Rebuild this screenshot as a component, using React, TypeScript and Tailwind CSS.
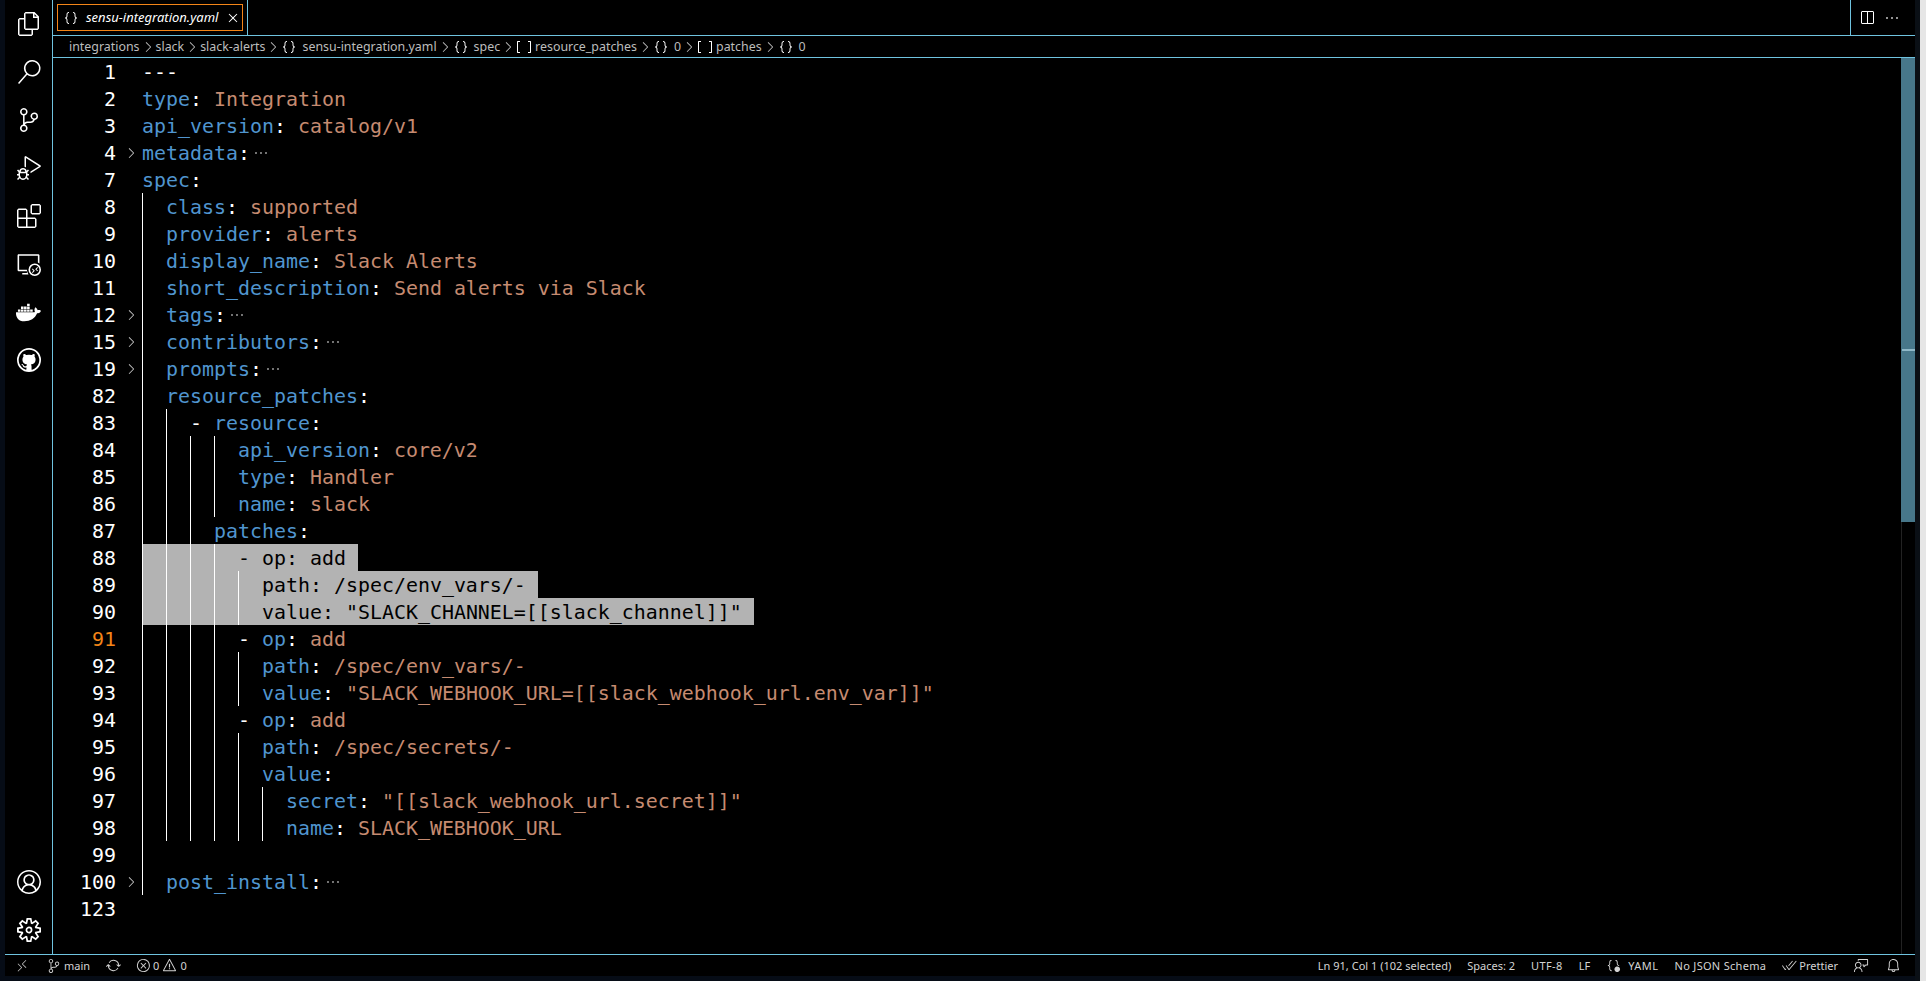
// App.tsx - VS Code high contrast editor window with a yaml file open
import { FaDocker } from 'react-icons/fa'
import {
  VscAccount,
  VscBell,
  VscBracketDot,
  VscCheckAll,
  VscChevronRight,
  VscClose,
  VscDebugAlt,
  VscEllipsis,
  VscError,
  VscExtensions,
  VscFeedback,
  VscFiles,
  VscGithub,
  VscJson,
  VscRemote,
  VscRemoteExplorer,
  VscSearch,
  VscSettingsGear,
  VscSourceControl,
  VscSplitHorizontal,
  VscSymbolArray,
  VscSync,
  VscWarning,
} from 'react-icons/vsc'

type Row = {
  n: number
  ind?: number
  dash?: boolean
  key?: string
  val?: string
  plain?: string
  fold?: boolean
  sel?: boolean
  active?: boolean
}

const rows: Row[] = [
  { n: 1, plain: '---' },
  { n: 2, key: 'type', val: 'Integration' },
  { n: 3, key: 'api_version', val: 'catalog/v1' },
  { n: 4, key: 'metadata', fold: true },
  { n: 7, key: 'spec' },
  { n: 8, ind: 2, key: 'class', val: 'supported' },
  { n: 9, ind: 2, key: 'provider', val: 'alerts' },
  { n: 10, ind: 2, key: 'display_name', val: 'Slack Alerts' },
  { n: 11, ind: 2, key: 'short_description', val: 'Send alerts via Slack' },
  { n: 12, ind: 2, key: 'tags', fold: true },
  { n: 15, ind: 2, key: 'contributors', fold: true },
  { n: 19, ind: 2, key: 'prompts', fold: true },
  { n: 82, ind: 2, key: 'resource_patches' },
  { n: 83, ind: 4, dash: true, key: 'resource' },
  { n: 84, ind: 8, key: 'api_version', val: 'core/v2' },
  { n: 85, ind: 8, key: 'type', val: 'Handler' },
  { n: 86, ind: 8, key: 'name', val: 'slack' },
  { n: 87, ind: 6, key: 'patches' },
  { n: 88, ind: 8, dash: true, key: 'op', val: 'add', sel: true },
  { n: 89, ind: 10, key: 'path', val: '/spec/env_vars/-', sel: true },
  { n: 90, ind: 10, key: 'value', val: '"SLACK_CHANNEL=[[slack_channel]]"', sel: true },
  { n: 91, ind: 8, dash: true, key: 'op', val: 'add', active: true },
  { n: 92, ind: 10, key: 'path', val: '/spec/env_vars/-' },
  { n: 93, ind: 10, key: 'value', val: '"SLACK_WEBHOOK_URL=[[slack_webhook_url.env_var]]"' },
  { n: 94, ind: 8, dash: true, key: 'op', val: 'add' },
  { n: 95, ind: 10, key: 'path', val: '/spec/secrets/-' },
  { n: 96, ind: 10, key: 'value' },
  { n: 97, ind: 12, key: 'secret', val: '"[[slack_webhook_url.secret]]"' },
  { n: 98, ind: 12, key: 'name', val: 'SLACK_WEBHOOK_URL' },
  { n: 99 },
  { n: 100, ind: 2, key: 'post_install', fold: true },
  { n: 123 },
]

// indent column, first line, last line
const guideRanges = [
  [0, 8, 100],
  [2, 83, 98],
  [4, 84, 98],
  [6, 84, 86],
  [6, 88, 98],
  [8, 89, 90],
  [8, 92, 93],
  [8, 95, 98],
  [10, 97, 98],
]

const crumbs = [
  { text: 'integrations' },
  { text: 'slack' },
  { text: 'slack-alerts' },
  { text: 'sensu-integration.yaml', icon: 'obj' },
  { text: 'spec', icon: 'obj' },
  { text: 'resource_patches', icon: 'arr' },
  { text: '0', icon: 'obj' },
  { text: 'patches', icon: 'arr' },
  { text: '0', icon: 'obj' },
]

const CodeLine = ({ row }: { row: Row }) => {
  const indent = ' '.repeat(row.ind ?? 0)
  const keyColor = row.sel ? 'text-black' : 'text-[#5095cf]'
  const valColor = row.sel ? 'text-black' : 'text-[#c68b71]'
  const guides = guideRanges.filter((g) => row.n >= g[1] && row.n <= g[2])

  return (
    <div className="flex h-[27px] leading-[29px]">
      <div className={`w-[63px] text-right ${row.active ? 'text-[#f38518]' : 'text-white'}`}>{row.n}</div>
      <div className="flex w-[26px] items-center justify-center pl-[4px] text-[#c5c5c5]">
        {row.fold && <VscChevronRight size={16} />}
      </div>
      <div className="relative flex flex-1 whitespace-pre">
        {guides.map((g) => (
          <div key={g[0] + '-' + g[1]} className="absolute top-0 h-[27px] w-px bg-white" style={{ left: g[0] * 12 }} />
        ))}
        <span className={row.sel ? 'h-[27px] bg-[#b3b3b3] text-black' : 'h-[27px] text-white'}>
          {row.plain}
          {indent}
          {row.dash && '- '}
          {row.key && <span className={keyColor}>{row.key}</span>}
          {row.key && ':'}
          {row.val && ' '}
          {row.val && <span className={valColor}>{row.val}</span>}
          {row.sel && ' '}
        </span>
        {row.fold && (
          <span className="ml-[3px] flex h-[27px] items-center text-[#9a9a9a]">
            <VscEllipsis size={16} />
          </span>
        )}
      </div>
    </div>
  )
}

const ActivityIcon = ({ children }: { children: React.ReactNode }) => (
  <div className="flex h-[48px] w-full items-center justify-center text-white">{children}</div>
)

export default function App() {
  return (
    <div className="flex h-[981px] w-[1926px] overflow-hidden bg-[#060c16] font-['Noto_Sans',sans-serif]">
      <div className="w-[5px] shrink-0" />

      {/* Window */}
      <div className="flex h-[976px] w-[1910px] shrink-0 flex-col bg-black">
        <div className="flex min-h-0 flex-1">
          {/* Activity bar */}
          <div className="flex w-[48px] shrink-0 flex-col justify-between border-r border-[#6fc3df]">
            <div>
              <ActivityIcon><VscFiles size={24} /></ActivityIcon>
              <ActivityIcon><VscSearch size={24} /></ActivityIcon>
              <ActivityIcon><VscSourceControl size={24} /></ActivityIcon>
              <ActivityIcon><VscDebugAlt size={24} /></ActivityIcon>
              <ActivityIcon><VscExtensions size={24} /></ActivityIcon>
              <ActivityIcon><VscRemoteExplorer size={24} /></ActivityIcon>
              <ActivityIcon><FaDocker size={25} /></ActivityIcon>
              <ActivityIcon><VscGithub size={24} /></ActivityIcon>
            </div>
            <div>
              <ActivityIcon><VscAccount size={24} /></ActivityIcon>
              <ActivityIcon><VscSettingsGear size={24} /></ActivityIcon>
            </div>
          </div>

          <div className="flex min-w-0 flex-1 flex-col">
            {/* Tab row */}
            <div className="flex h-[36px] shrink-0 justify-between border-b border-[#6fc3df]">
              <div className="w-[195px] border-r border-[#6fc3df] p-[4px]">
                <div className="flex h-[27px] items-center border border-[#f38518] pl-[5px] pr-px text-[13px] italic text-white">
                  <VscJson size={16} className="shrink-0" />
                  <span className="ml-[7px] flex-1 whitespace-nowrap">sensu-integration.yaml</span>
                  <VscClose size={16} className="shrink-0" />
                </div>
              </div>
              <div className="flex w-[65px] items-center gap-[9px] border-l border-[#6fc3df] pl-[8px] text-white">
                <VscSplitHorizontal size={16} />
                <VscEllipsis size={16} className="text-[#c5c5c5]" />
              </div>
            </div>

            {/* Breadcrumbs */}
            <div className="flex h-[22px] shrink-0 items-center whitespace-nowrap border-b border-[#6fc3df] pl-[16px] text-[12.4px] leading-[21px] text-[#bdbdbd]">
              {crumbs.map((c, i) => (
                <div key={i} className="flex items-center">
                  {i > 0 && <VscChevronRight size={16} className="text-[#bdbdbd]" />}
                  {c.icon === 'obj' && <VscJson size={16} className="mr-[5px] text-white" />}
                  {c.icon === 'arr' && <VscSymbolArray size={16} className="mr-[3px] text-white" />}
                  <span>{c.text}</span>
                </div>
              ))}
            </div>

            {/* Editor */}
            <div className="relative min-h-0 flex-1 font-['DejaVu_Sans_Mono',monospace] text-[19.93px]">
              {rows.map((row) => (
                <CodeLine key={row.n} row={row} />
              ))}
              {/* Scrollbar */}
              <div className="absolute inset-y-0 right-0 w-[14px] border-l border-[#222222]">
                <div className="relative -ml-px h-[464px] bg-[#47778a]">
                  <div className="absolute left-px right-0 top-[291px] h-[2px] bg-[#8fb8c8]" />
                </div>
              </div>
            </div>
          </div>
        </div>

        {/* Status bar */}
        <div className="flex h-[22px] shrink-0 items-center justify-between border-t border-[#6fc3df] text-[11px] leading-none text-[#d4d4d4]">
          <div className="flex items-center">
            <VscRemote size={14} className="ml-[10px] text-[#bdbdbd]" />
            <VscSourceControl size={14} className="ml-[18px]" />
            <span className="ml-[3px]">main</span>
            <VscSync size={15} className="ml-[16px]" />
            <VscError size={15} className="ml-[15px]" />
            <span className="ml-[2px]">0</span>
            <VscWarning size={15} className="ml-[3px]" />
            <span className="ml-[3px]">0</span>
          </div>
          <div className="flex items-center">
            <span>Ln 91, Col 1 (102 selected)</span>
            <span className="ml-[16px]">Spaces: 2</span>
            <span className="ml-[16px] tracking-[0.4px]">UTF-8</span>
            <span className="ml-[16px]">LF</span>
            <VscBracketDot size={15} className="ml-[16px]" />
            <span className="ml-[7px] tracking-[0.5px]">YAML</span>
            <span className="ml-[16px] tracking-[0.3px]">No JSON Schema</span>
            <VscCheckAll size={15} className="ml-[16px]" />
            <span className="ml-[2px]">Prettier</span>
            <VscFeedback size={15} className="ml-[16px]" />
            <VscBell size={15} className="ml-[17px] mr-[14px]" />
          </div>
        </div>
      </div>

      <div className="w-[5px] shrink-0 bg-[#0a0f15]" />
      <div className="flex-1 bg-[#e6e6e6]" />
    </div>
  )
}
